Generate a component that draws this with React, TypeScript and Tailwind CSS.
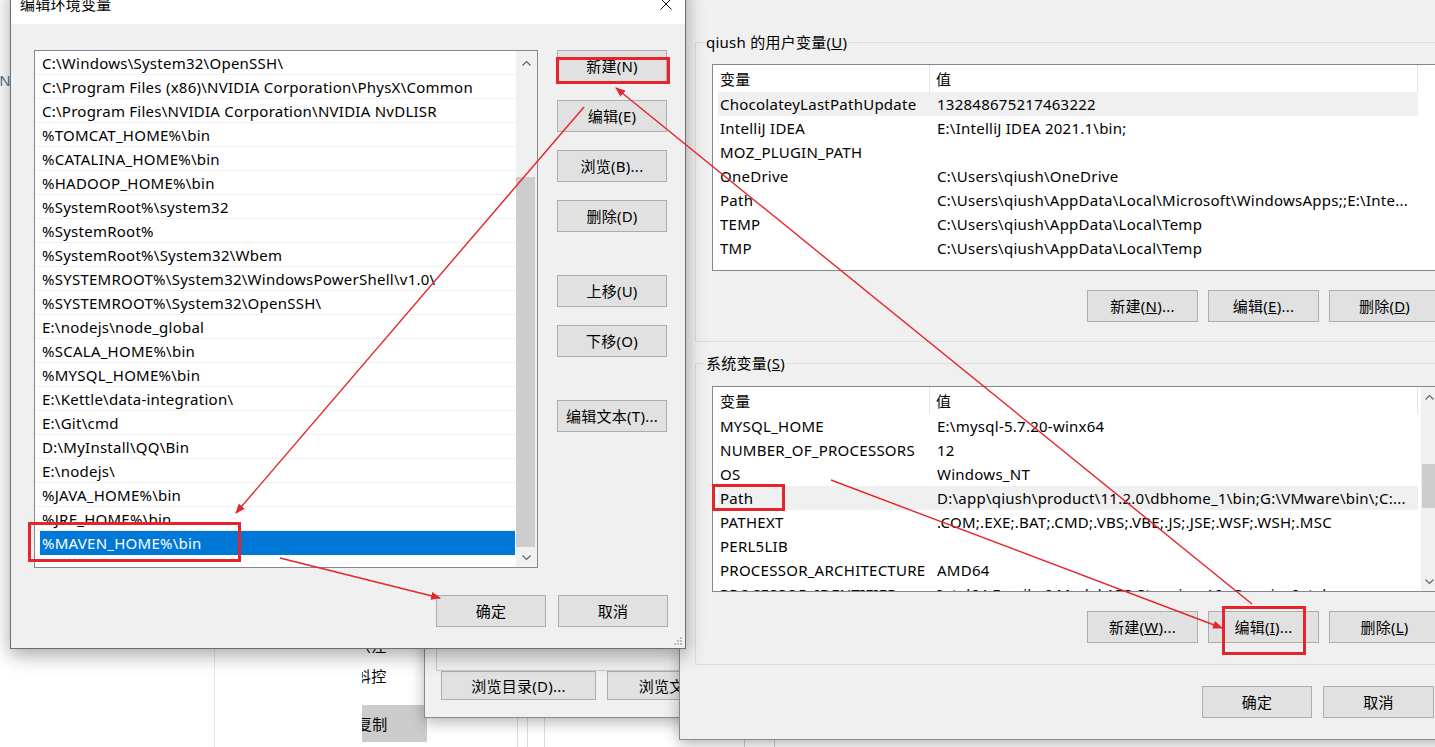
import { type JSX } from 'react'

const pathEntries = [
  'C:\\Windows\\System32\\OpenSSH\\',
  'C:\\Program Files (x86)\\NVIDIA Corporation\\PhysX\\Common',
  'C:\\Program Files\\NVIDIA Corporation\\NVIDIA NvDLISR',
  '%TOMCAT_HOME%\\bin',
  '%CATALINA_HOME%\\bin',
  '%HADOOP_HOME%\\bin',
  '%SystemRoot%\\system32',
  '%SystemRoot%',
  '%SystemRoot%\\System32\\Wbem',
  '%SYSTEMROOT%\\System32\\WindowsPowerShell\\v1.0\\',
  '%SYSTEMROOT%\\System32\\OpenSSH\\',
  'E:\\nodejs\\node_global',
  '%SCALA_HOME%\\bin',
  '%MYSQL_HOME%\\bin',
  'E:\\Kettle\\data-integration\\',
  'E:\\Git\\cmd',
  'D:\\MyInstall\\QQ\\Bin',
  'E:\\nodejs\\',
  '%JAVA_HOME%\\bin',
  '%JRE_HOME%\\bin'
]

const userVars: [string, string][] = [
  ['ChocolateyLastPathUpdate', '132848675217463222'],
  ['IntelliJ IDEA', 'E:\\IntelliJ IDEA 2021.1\\bin;'],
  ['MOZ_PLUGIN_PATH', ''],
  ['OneDrive', 'C:\\Users\\qiush\\OneDrive'],
  ['Path', 'C:\\Users\\qiush\\AppData\\Local\\Microsoft\\WindowsApps;;E:\\Inte...'],
  ['TEMP', 'C:\\Users\\qiush\\AppData\\Local\\Temp'],
  ['TMP', 'C:\\Users\\qiush\\AppData\\Local\\Temp']
]

const sysVars: [string, string][] = [
  ['MYSQL_HOME', 'E:\\mysql-5.7.20-winx64'],
  ['NUMBER_OF_PROCESSORS', '12'],
  ['OS', 'Windows_NT'],
  ['Path', 'D:\\app\\qiush\\product\\11.2.0\\dbhome_1\\bin;G:\\VMware\\bin\\;C:...'],
  ['PATHEXT', '.COM;.EXE;.BAT;.CMD;.VBS;.VBE;.JS;.JSE;.WSF;.WSH;.MSC'],
  ['PERL5LIB', ''],
  ['PROCESSOR_ARCHITECTURE', 'AMD64'],
  ['PROCESSOR_IDENTIFIER', 'Intel64 Family 6 Model 158 Stepping 10, GenuineIntel']
]

function Btn({ children, className = '' }: { children: React.ReactNode; className?: string }): JSX.Element {
  return (
    <div
      className={`flex shrink-0 items-center justify-center border border-[#adadad] bg-[#e1e1e1] text-[15px] text-black ${className}`}
    >
      {children}
    </div>
  )
}

function Chevron({ down = false }: { down?: boolean }): JSX.Element {
  return (
    <svg width="9" height="5" viewBox="0 0 9 5">
      <polyline
        points={down ? '0.5,0.5 4.5,4.5 8.5,0.5' : '0.5,4.5 4.5,0.5 8.5,4.5'}
        fill="none"
        stroke="#606060"
        strokeWidth="1.1"
      />
    </svg>
  )
}

function VarList({
  rows,
  highlight,
  scroll,
  className
}: {
  rows: [string, string][]
  highlight: number
  scroll: boolean
  className: string
}): JSX.Element {
  return (
    <div className={`flex w-[727px] overflow-hidden border border-[#828790] bg-white ${className}`}>
      <div className="min-w-0 flex-1">
        <div className="flex h-[27px]">
          <div className="flex h-full w-[217px] shrink-0 items-center border-r border-[#e5e5e5] pl-[7px]">变量</div>
          <div className="flex h-full w-[488px] shrink-0 items-center border-r border-[#e5e5e5] pl-[6px]">值</div>
        </div>
        {rows.map(([name, value], i) => (
          <div
            key={name + i}
            className={`ml-[5px] flex h-[24px] w-[700px] items-center whitespace-nowrap ${
              i === highlight ? 'bg-[#f0f0f0]' : ''
            }`}
          >
            <div className="w-[217px] shrink-0 overflow-hidden pl-[2px]">{name}</div>
            <div className="min-w-0 flex-1 overflow-hidden pl-[2px]">{value}</div>
          </div>
        ))}
      </div>
      {scroll && (
        <div className="flex w-[17px] shrink-0 flex-col bg-[#f0f0f0]">
          <div className="flex h-[20px] items-center justify-center">
            <Chevron />
          </div>
          <div className="h-[57px]" />
          <div className="mx-[1px] h-[44px] bg-[#cdcdcd]" />
          <div className="flex-1" />
          <div className="flex h-[20px] items-center justify-center">
            <Chevron down />
          </div>
        </div>
      )}
    </div>
  )
}

function GroupBox({ label, children, className = '' }: { label: React.ReactNode; children: React.ReactNode; className?: string }): JSX.Element {
  return (
    <div className={`relative ml-[15px] w-[760px] border border-[#dcdcdc] pl-[16px] pr-[14px] ${className}`}>
      <div className="absolute top-[-12px] left-[9px] bg-[#f0f0f0] px-[1px] leading-[22px]">{label}</div>
      {children}
    </div>
  )
}

function EditEnvDialog(): JSX.Element {
  return (
    <div className="absolute top-[-17px] left-[10px] flex h-[666px] w-[676px] flex-col border border-[#6e6e6e] bg-[#f0f0f0] shadow-[0_6px_18px_rgba(0,0,0,0.35)]">
      <div className="flex h-[40px] shrink-0 items-center justify-between bg-white pr-[13px] pl-[9px]">
        <span>编辑环境变量</span>
        <svg width="12" height="12" viewBox="0 0 12 12">
          <path d="M0.5 0.5 L11.5 11.5 M11.5 0.5 L0.5 11.5" stroke="#111" strokeWidth="1" />
        </svg>
      </div>
      <div className="flex-1 pt-[26px] pr-[17px] pl-[23px]">
        <div className="flex gap-[19px]">
          <div className="flex h-[518px] w-[504px] border border-[#828790] bg-white">
            <div className="min-w-0 flex-1">
              {pathEntries.map((p) => (
                <div key={p} className="flex h-[24px] items-center border-b border-[#f0f0f0] pl-[7px] whitespace-nowrap">
                  {p}
                </div>
              ))}
              <div className="flex h-[24px] items-center">
                <div className="ml-[5px] flex h-full w-[475px] items-center bg-[#0078d7] pl-[2px] text-white">
                  %MAVEN_HOME%\bin
                </div>
              </div>
            </div>
            <div className="flex w-[21px] shrink-0 flex-col bg-[#f0f0f0]">
              <div className="flex h-[24px] items-center justify-center">
                <Chevron />
              </div>
              <div className="h-[102px]" />
              <div className="mr-[2px] flex-1 bg-[#cdcdcd]" />
              <div className="flex h-[20px] items-center justify-center">
                <Chevron down />
              </div>
            </div>
          </div>
          <div className="flex w-[110px] flex-col">
            <Btn className="h-[32px]">新建(N)</Btn>
            <Btn className="mt-[18px] h-[32px]">编辑(E)</Btn>
            <Btn className="mt-[18px] h-[32px]">浏览(B)...</Btn>
            <Btn className="mt-[18px] h-[32px]">删除(D)</Btn>
            <Btn className="mt-[43px] h-[32px]">上移(U)</Btn>
            <Btn className="mt-[18px] h-[32px]">下移(O)</Btn>
            <Btn className="mt-[43px] h-[32px]">编辑文本(T)...</Btn>
          </div>
        </div>
        <div className="mt-[27px] flex justify-end gap-[12px]">
          <Btn className="h-[32px] w-[110px]">确定</Btn>
          <Btn className="h-[32px] w-[110px]">取消</Btn>
        </div>
      </div>
      <svg className="absolute right-[2px] bottom-[2px]" width="10" height="10" viewBox="0 0 10 10">
        <rect x="7" y="1" width="2" height="2" fill="#bdbdbd" />
        <rect x="4" y="4" width="2" height="2" fill="#bdbdbd" />
        <rect x="7" y="4" width="2" height="2" fill="#bdbdbd" />
        <rect x="1" y="7" width="2" height="2" fill="#bdbdbd" />
        <rect x="4" y="7" width="2" height="2" fill="#bdbdbd" />
        <rect x="7" y="7" width="2" height="2" fill="#bdbdbd" />
      </svg>
    </div>
  )
}

function EnvVarsDialog(): JSX.Element {
  return (
    <div className="absolute top-0 left-[679px] flex h-[740px] w-[800px] flex-col border-b border-l border-[#8a8a8a] bg-[#f0f0f0] pt-[42px] shadow-[0_4px_14px_rgba(0,0,0,0.3)]">
      <GroupBox
        className="pt-[21px] pb-[19px]"
        label={
          <>
            qiush 的用户变量(<u>U</u>)
          </>
        }
      >
        <VarList rows={userVars} highlight={0} scroll={false} className="h-[207px]" />
        <div className="mt-[19px] flex justify-end gap-[10px]">
          <Btn className="h-[32px] w-[111px]">
            新建(<u>N</u>)...
          </Btn>
          <Btn className="h-[32px] w-[111px]">
            编辑(<u>E</u>)...
          </Btn>
          <Btn className="h-[32px] w-[111px]">
            删除(<u>D</u>)
          </Btn>
        </div>
      </GroupBox>
      <GroupBox
        className="mt-[21px] pt-[22px] pb-[21px]"
        label={
          <>
            系统变量(<u>S</u>)
          </>
        }
      >
        <VarList rows={sysVars} highlight={3} scroll className="h-[206px]" />
        <div className="mt-[19px] flex justify-end gap-[10px]">
          <Btn className="h-[32px] w-[111px]">
            新建(<u>W</u>)...
          </Btn>
          <Btn className="h-[32px] w-[111px]">
            编辑(<u>I</u>)...
          </Btn>
          <Btn className="h-[32px] w-[111px]">
            删除(<u>L</u>)
          </Btn>
        </div>
      </GroupBox>
      <div className="mt-[21px] flex justify-end gap-[11px] pr-[45px]">
        <Btn className="h-[32px] w-[110px]">确定</Btn>
        <Btn className="h-[32px] w-[111px]">取消</Btn>
      </div>
    </div>
  )
}

function BackDialog(): JSX.Element {
  return (
    <div className="absolute top-[400px] left-[424px] flex h-[318px] w-[290px] flex-col border border-[#8a8a8a] bg-[#f0f0f0] pb-[17px] shadow-[0_4px_14px_rgba(0,0,0,0.3)]">
      <div className="ml-[11px] flex-1 border-b border-l border-[#c9c9c9]" />
      <div className="flex gap-[11px] pl-[16px]">
        <Btn className="h-[29px] w-[155px]">浏览目录(D)...</Btn>
        <Btn className="h-[29px] w-[155px]">浏览文件(F)...</Btn>
      </div>
    </div>
  )
}

function Annotations(): JSX.Element {
  const red = '#e5242b'
  return (
    <svg className="pointer-events-none absolute inset-0" width="1435" height="747" viewBox="0 0 1435 747">
      <defs>
        <marker id="arrow" markerUnits="userSpaceOnUse" markerWidth="10" markerHeight="8" refX="9" refY="4" orient="auto">
          <path d="M0,0 L10,4 L0,8 z" fill={red} />
        </marker>
      </defs>
      <g fill="none" stroke={red} strokeWidth="3">
        <rect x="557.5" y="58.5" width="111" height="24" />
        <rect x="29.5" y="523.5" width="210" height="37" />
        <rect x="713.5" y="485.5" width="70" height="24" />
        <rect x="1223.5" y="607.5" width="81" height="46" />
      </g>
      <g stroke={red} strokeWidth="1.4">
        <line x1="584" y1="107" x2="236" y2="513" markerEnd="url(#arrow)" />
        <line x1="1252" y1="604" x2="616" y2="88" markerEnd="url(#arrow)" />
        <line x1="280" y1="558" x2="440" y2="598" markerEnd="url(#arrow)" />
        <line x1="831" y1="480" x2="1222" y2="628" markerEnd="url(#arrow)" />
      </g>
    </svg>
  )
}

export default function App(): JSX.Element {
  return (
    <div className="relative h-[747px] w-[1435px] overflow-hidden bg-white [font-family:'Noto_Sans','Noto_Sans_CJK_SC',sans-serif] text-[15px] leading-[24px] tracking-[0.25px] text-black">
      {/* desktop behind the dialogs */}
      <div className="absolute top-[68px] left-[-6px] text-[#4f6d8f]">IN</div>
      <div className="absolute top-0 left-[214px] h-[747px] w-px bg-[#e6e6e6]" />
      <div className="absolute top-[634px] left-[362px] w-[65px] overflow-hidden">
        <div className="ml-[-6px]">（注</div>
        <div className="mt-[6px] ml-[-6px]">蚪控</div>
      </div>
      <div className="absolute top-[705px] left-[362px] flex h-[37px] w-[65px] items-center overflow-hidden bg-[#cccccc]">
        <span className="ml-[-5px]">复制</span>
      </div>
      <div className="absolute top-[717px] left-[517px] h-[30px] w-px bg-[#dedede]" />
      <div className="absolute top-[717px] left-[527px] h-[30px] w-px bg-[#dedede]" />
      <div className="absolute top-[717px] left-[544px] h-[30px] w-px bg-[#dedede]" />
      <div className="absolute top-[739px] left-[744px] h-[8px] w-px bg-[#cfcfcf]" />
      <div className="absolute top-[739px] left-[774px] h-[8px] w-px bg-[#cfcfcf]" />

      <BackDialog />
      <EnvVarsDialog />
      <EditEnvDialog />
      <Annotations />
    </div>
  )
}
